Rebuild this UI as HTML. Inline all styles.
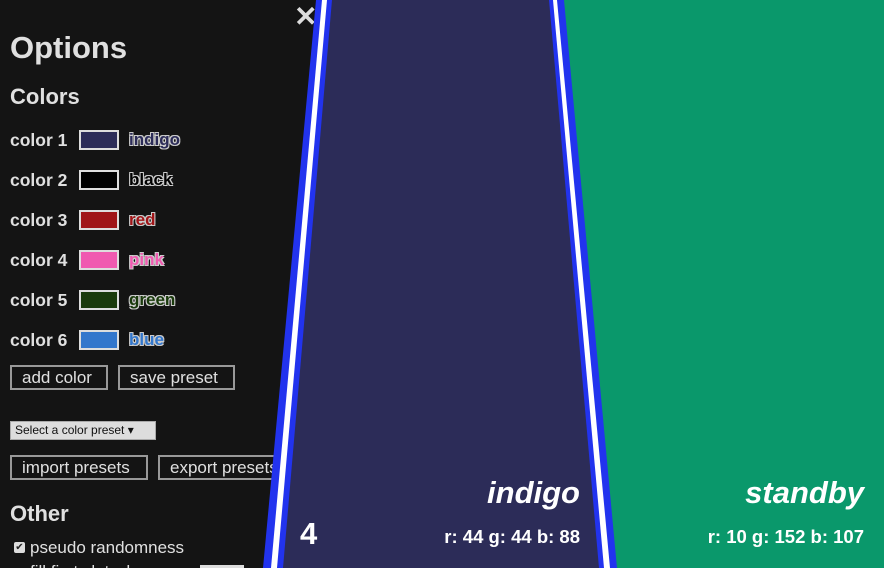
<!DOCTYPE html>
<html><head><meta charset="utf-8"><style>
*{margin:0;padding:0;box-sizing:border-box}
html,body{width:884px;height:568px;overflow:hidden}
body{background:#0a986b;font-family:"Liberation Sans",Arial,sans-serif;position:relative}
#panel{position:absolute;left:0;top:0;width:330px;height:568px;background:#141414;color:#ddd;overflow:hidden}
.abs{position:absolute;white-space:nowrap}
h1{position:absolute;left:10px;top:30px;font-size:31px;font-weight:bold;color:#e0e0e0}
h2{position:absolute;left:10px;font-size:22px;font-weight:bold;color:#e0e0e0}
.lbl{position:absolute;left:10px;font-size:17.5px;font-weight:bold;color:#e0e0e0}
.sw{position:absolute;left:79px;width:40px;height:20px;border:2px solid #ddd}
.nm{position:absolute;left:129px;font-size:17px;font-weight:bold}
.btn{position:absolute;height:25px;border:2px solid #999;color:#e0e0e0;font-size:17px;padding:0 10px;line-height:21px;background:#141414}
svg{position:absolute;left:0;top:0}
.t{position:absolute;color:#fff;font-weight:bold;white-space:nowrap}
</style></head><body>
<div id="panel">
<div class="abs" style="left:294px;top:0px;font-size:28px;font-weight:bold;color:#ddd">✕</div>
<h1>Options</h1>
<h2 style="top:84px">Colors</h2>
<div class="lbl" style="top:130px">color 1</div><div class="sw" style="top:130px;background:#2c2c58"></div><div class="nm" style="top:130px;color:#2c2c58;text-shadow:-1px -1px 0 #ccc,1px -1px 0 #ccc,-1px 1px 0 #ccc,1px 1px 0 #ccc">indigo</div>
<div class="lbl" style="top:170px">color 2</div><div class="sw" style="top:170px;background:#000"></div><div class="nm" style="top:170px;color:#000;text-shadow:-1px -1px 0 #ccc,1px -1px 0 #ccc,-1px 1px 0 #ccc,1px 1px 0 #ccc">black</div>
<div class="lbl" style="top:210px">color 3</div><div class="sw" style="top:210px;background:#a01518"></div><div class="nm" style="top:210px;color:#a01518;text-shadow:-1px -1px 0 #ccc,1px -1px 0 #ccc,-1px 1px 0 #ccc,1px 1px 0 #ccc">red</div>
<div class="lbl" style="top:250px">color 4</div><div class="sw" style="top:250px;background:#f05ab0"></div><div class="nm" style="top:250px;color:#f05ab0;text-shadow:-1px -1px 0 #ccc,1px -1px 0 #ccc,-1px 1px 0 #ccc,1px 1px 0 #ccc">pink</div>
<div class="lbl" style="top:290px">color 5</div><div class="sw" style="top:290px;background:#1a3a0c"></div><div class="nm" style="top:290px;color:#1a3a0c;text-shadow:-1px -1px 0 #ccc,1px -1px 0 #ccc,-1px 1px 0 #ccc,1px 1px 0 #ccc">green</div>
<div class="lbl" style="top:330px">color 6</div><div class="sw" style="top:330px;background:#3377cc"></div><div class="nm" style="top:330px;color:#3377cc;text-shadow:-1px -1px 0 #ccc,1px -1px 0 #ccc,-1px 1px 0 #ccc,1px 1px 0 #ccc">blue</div>
<div class="btn" style="left:10px;top:365px;width:98px">add color</div>
<div class="btn" style="left:118px;top:365px;width:117px">save preset</div>
<div class="abs" style="left:10px;top:421px;width:146px;height:19px;background:#ddd;border:1px solid #aaa;color:#111;font-size:12px;line-height:17px;padding-left:4px">Select a color preset ▾</div>
<div class="btn" style="left:10px;top:455px;width:138px">import presets</div>
<div class="btn" style="left:158px;top:455px;width:140px">export presets</div>
<h2 style="top:501px">Other</h2>
<div class="abs" style="left:14px;top:542px;width:11px;height:11px;background:#ddd;border-radius:2px;color:#222;font-size:10px;line-height:11px;text-align:center">✔</div>
<div class="abs" style="left:30px;top:538px;font-size:17px;color:#e0e0e0">pseudo randomness</div>
<div class="abs" style="left:30px;top:562px;font-size:17px;color:#e0e0e0">fill first slot when</div>
<div class="abs" style="left:200px;top:565px;width:44px;height:3px;background:#ddd"></div>
</div>
<svg width="884" height="568">
<polygon points="316,0 564,0 617,568 263,568" fill="#2233ee"/>
<polygon points="322,0 557,0 610,568 271,568" fill="#fff"/>
<polygon points="327,0 553,0 604,568 277,568" fill="#2233ee"/>
<polygon points="332,0 549,0 599,568 283,568" fill="#2c2c58"/>
</svg>
<div class="t" style="right:304px;top:475px;font-size:31px;font-style:italic">indigo</div>
<div class="t" style="right:304px;top:526px;font-size:18.5px">r: 44 g: 44 b: 88</div>
<div class="t" style="left:300px;top:516px;font-size:31px">4</div>
<div class="t" style="right:20px;top:475px;font-size:31px;font-style:italic">standby</div>
<div class="t" style="right:20px;top:526px;font-size:18.5px">r: 10 g: 152 b: 107</div>
</body></html>
